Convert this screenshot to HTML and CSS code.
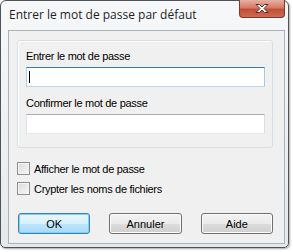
FILE: index.html
```html
<!DOCTYPE html>
<html lang="fr">
<head>
<meta charset="utf-8">
<title>Entrer le mot de passe par défaut</title>
<link rel="stylesheet" href="styles.css">
</head>
<body>
<div class="window">
  <div class="titlebar">
    <span class="title">Entrer le mot de passe par défaut</span>
    <span class="close">
      <svg width="16" height="11" viewBox="0 0 16 11">
        <path d="M2 1.5 L5.5 1.5 L8 4 L10.5 1.5 L14 1.5 L10 5.5 L14 9.5 L10.5 9.5 L8 7 L5.5 9.5 L2 9.5 L6 5.5 Z" fill="#ffffff" stroke="#5a2a22" stroke-width="1" stroke-linejoin="round"/>
      </svg>
    </span>
  </div>
  <div class="client">
    <div class="group">
      <label class="lbl">Entrer le mot de passe</label>
      <div class="input focus"><span class="caret"></span></div>
      <label class="lbl lbl2">Confirmer le mot de passe</label>
      <div class="input"></div>
    </div>
    <div class="checks">
      <div class="check"><span class="box"></span><span>Afficher le mot de passe</span></div>
      <div class="check"><span class="box"></span><span>Crypter les noms de fichiers</span></div>
    </div>
    <div class="buttons">
      <span class="btn default">OK</span>
      <span class="btn">Annuler</span>
      <span class="btn">Aide</span>
    </div>
  </div>
</div>
</body>
</html>
```
FILE: styles.css
```css
html, body {
  margin: 0;
  padding: 0;
  background: #ffffff;
}
body {
  width: 293px;
  height: 252px;
  overflow: hidden;
}
.window {
  box-sizing: border-box;
  width: 289px;
  height: 248px;
  border: 1px solid #505458;
  border-radius: 6px 6px 5px 5px;
  background: linear-gradient(#f7f8fa, #e6e9ec);
  padding: 0 3px 3px 7px;
  display: flex;
  flex-direction: column;
  box-shadow: 1px 1px 2px rgba(0,0,0,0.35);
}
.titlebar {
  height: 29px;
  display: flex;
  justify-content: space-between;
  align-items: flex-start;
  flex: none;
}
.title {
  font-family: "Open Sans", sans-serif;
  font-size: 12px;
  color: #1e1e1e;
  padding-top: 5px;
  padding-left: 1px;
}
.close {
  width: 46px;
  height: 18px;
  margin-top: -1px;
  box-sizing: border-box;
  border: 1px solid #7a3b2e;
  border-top: none;
  border-radius: 0 0 4px 4px;
  background: linear-gradient(#e6b0a4 0%, #d67b68 45%, #c24f37 55%, #cf6a52 100%);
  display: flex;
  align-items: center;
  justify-content: center;
}
.client {
  flex: 1;
  box-sizing: border-box;
  border: 1px solid #a9b1b9;
  background: #f0f0f0;
  padding: 9px 11px 0 8px;
  font-family: "Liberation Sans", Arial, sans-serif;
  font-size: 11px;
  letter-spacing: -0.3px;
  color: #000;
}
.group {
  box-sizing: border-box;
  height: 108px;
  border: 1px solid #d5dfe5;
  border-radius: 3px;
  box-shadow: inset 1px 1px 0 #ffffff;
  padding: 9px 7px 0 8px;
}
.lbl {
  display: block;
  height: 13px;
  line-height: 13px;
  margin-bottom: 4px;
}
.lbl2 {
  margin-top: 10px;
}
.input {
  box-sizing: border-box;
  height: 20px;
  background: #fff;
  border: 1px solid;
  border-color: #abadb3 #dbdfe6 #e3e9ef #e2e3ea;
  position: relative;
}
.input.focus {
  border-color: #3d7bad #a4c9e3 #b7d9ed #b5cfe7;
}
.caret {
  position: absolute;
  left: 2px;
  top: 3px;
  width: 1px;
  height: 12px;
  background: #000;
}
.checks {
  padding-top: 14px;
}
.check {
  display: flex;
  align-items: center;
  height: 13px;
  margin-bottom: 7px;
  gap: 4px;
}
.box {
  box-sizing: border-box;
  width: 13px;
  height: 13px;
  border: 1px solid #8e8f8f;
  background: linear-gradient(135deg, #dcdcdc, #f6f6f6);
  box-shadow: inset 0 0 0 1px #f4f4f4;
}
.buttons {
  display: flex;
  gap: 19px;
  padding-top: 11px;
  padding-left: 1px;
}
.btn {
  box-sizing: border-box;
  width: 73px;
  height: 21px;
  border: 1px solid #707070;
  border-radius: 3px;
  background: linear-gradient(#f2f2f2 0%, #ebebeb 50%, #dddddd 51%, #cfcfcf 100%);
  box-shadow: inset 0 0 0 1px #fcfcfc;
  display: flex;
  align-items: center;
  justify-content: center;
  letter-spacing: 0;
}
.btn.default {
  border-color: #3c7fb1;
  background: linear-gradient(#eaf6fd 0%, #d9f0fc 50%, #bee6fd 51%, #a7d9f5 100%);
  box-shadow: inset 0 0 0 1px #7fd0f5;
}
```
